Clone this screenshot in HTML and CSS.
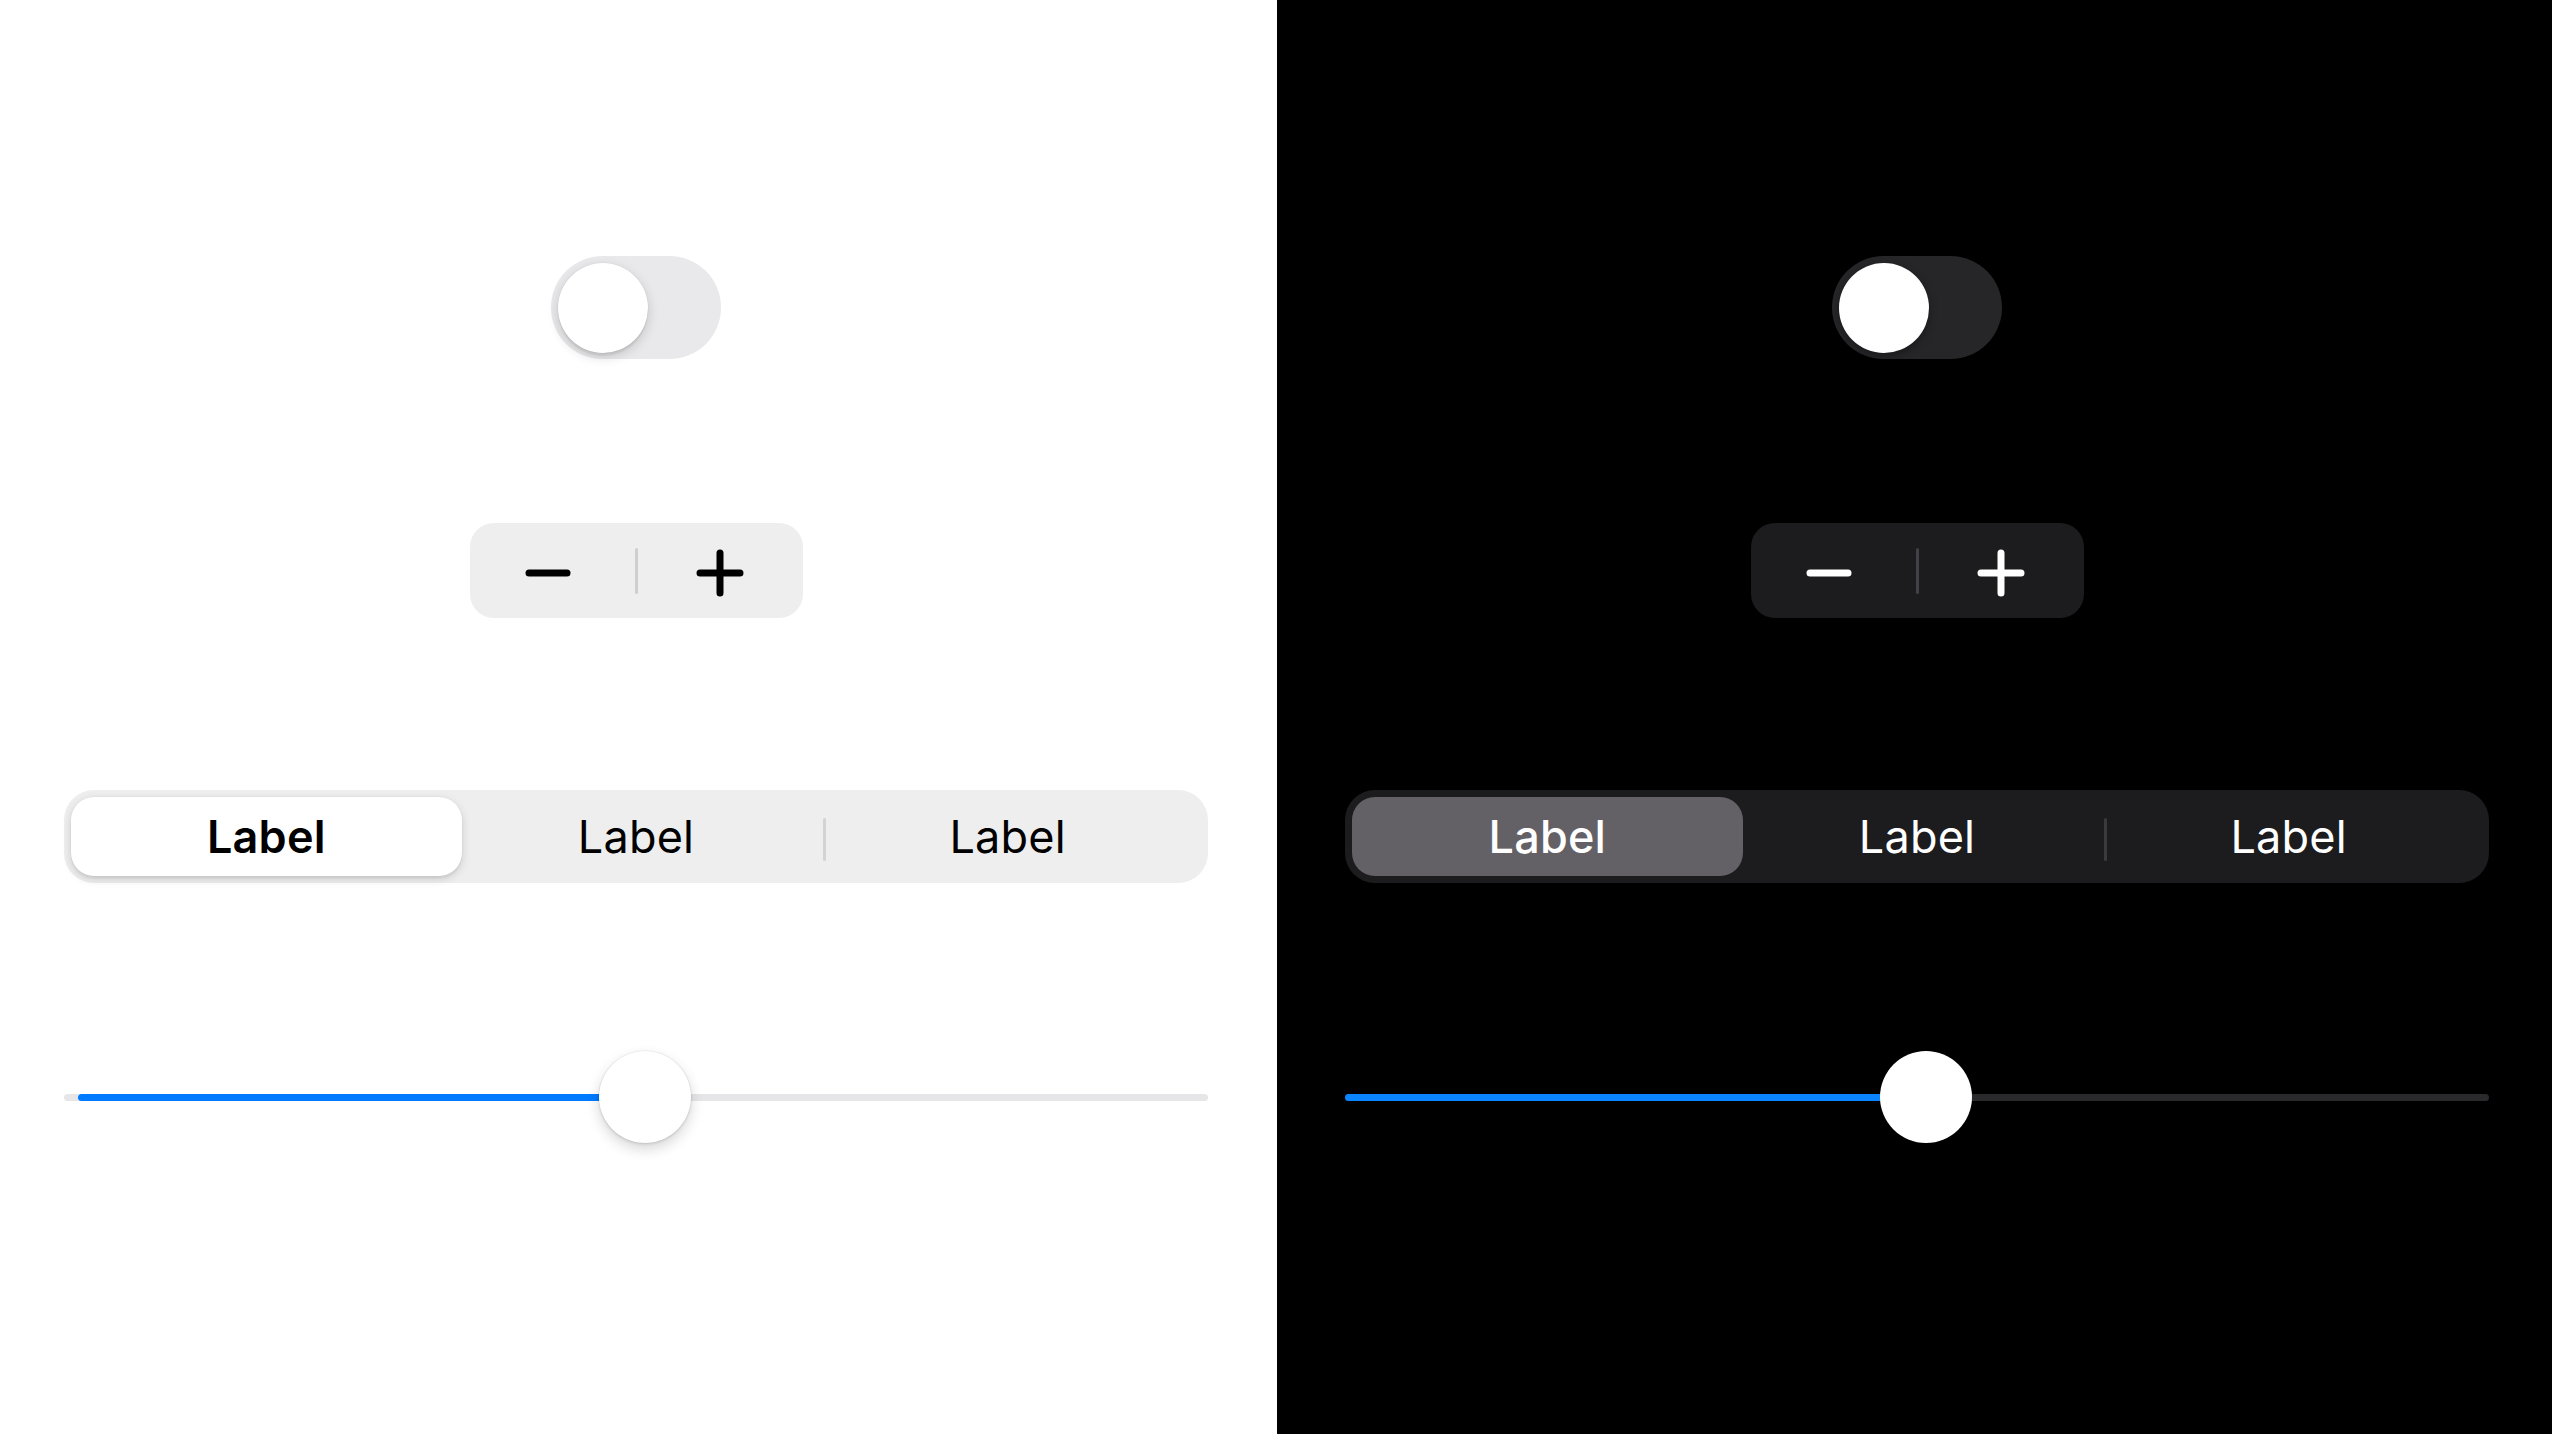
FILE: index.html
```html
<!DOCTYPE html>
<html lang="en">
<head>
<meta charset="utf-8">
<title>Controls</title>
<link rel="stylesheet" href="styles.css">
</head>
<body>
<div class="page">
  <section class="panel panel--light">
    <div class="toggle"><div class="toggle__thumb"></div></div>
    <div class="stepper">
      <div class="stepper__btn stepper__btn--minus">
        <svg width="50" height="50" viewBox="0 0 50 50"><path d="M6 25H44" stroke="currentColor" stroke-width="7" stroke-linecap="round" fill="none"/></svg>
      </div>
      <div class="stepper__divider"></div>
      <div class="stepper__btn">
        <svg width="50" height="50" viewBox="0 0 50 50"><path d="M5 25H45M25 5V45" stroke="currentColor" stroke-width="7" stroke-linecap="round" fill="none"/></svg>
      </div>
    </div>
    <div class="segmented">
      <div class="segment segment--selected">Label</div>
      <div class="segment">Label</div>
      <div class="segment segment--divided">Label</div>
    </div>
    <div class="slider">
      <div class="slider__track">
        <div class="slider__fill" style="width: 50.8%"></div>
      </div>
      <div class="slider__thumb" style="left: 50.8%"></div>
    </div>
  </section>
  <section class="panel panel--dark">
    <div class="toggle"><div class="toggle__thumb"></div></div>
    <div class="stepper">
      <div class="stepper__btn stepper__btn--minus">
        <svg width="50" height="50" viewBox="0 0 50 50"><path d="M6 25H44" stroke="currentColor" stroke-width="7" stroke-linecap="round" fill="none"/></svg>
      </div>
      <div class="stepper__divider"></div>
      <div class="stepper__btn">
        <svg width="50" height="50" viewBox="0 0 50 50"><path d="M5 25H45M25 5V45" stroke="currentColor" stroke-width="7" stroke-linecap="round" fill="none"/></svg>
      </div>
    </div>
    <div class="segmented">
      <div class="segment segment--selected">Label</div>
      <div class="segment">Label</div>
      <div class="segment segment--divided">Label</div>
    </div>
    <div class="slider">
      <div class="slider__track">
        <div class="slider__fill" style="width: 50.8%"></div>
      </div>
      <div class="slider__thumb" style="left: 50.8%"></div>
    </div>
  </section>
</div>
</body>
</html>
```

FILE: styles.css
```css
* { box-sizing: border-box; }

html, body {
  margin: 0;
  padding: 0;
  width: 2552px;
  height: 1434px;
  overflow: hidden;
  font-family: Inter, "Noto Sans", "Liberation Sans", sans-serif;
}

.page {
  display: grid;
  grid-template-columns: 1277px 1275px;
  height: 1434px;
}

.panel {
  display: flex;
  flex-direction: column;
  align-items: center;
  padding-top: 256px;
}

.panel--light {
  background: #ffffff;
  padding-left: 64px;
  padding-right: 69px;
  color: #000;
}

.panel--dark {
  background: #000000;
  padding-left: 68px;
  padding-right: 63px;
  color: #fff;
}

/* Toggle */
.toggle {
  width: 170px;
  height: 103px;
  border-radius: 52px;
  padding: 6px 7px;
  display: flex;
  align-items: center;
  background: #e9e9eb;
}
.panel--dark .toggle { background: #262629; }

.toggle__thumb {
  width: 90px;
  height: 90px;
  border-radius: 50%;
  background: #fff;
  box-shadow: 0 3px 1px rgba(0,0,0,0.06), 0 4px 12px rgba(0,0,0,0.16), 0 0 0 0.5px rgba(0,0,0,0.05);
}
.panel--dark .toggle__thumb {
  box-shadow: 0 3px 8px rgba(0,0,0,0.35);
}

/* Stepper */
.stepper {
  margin-top: 164px;
  width: 333px;
  height: 95px;
  border-radius: 24px;
  background: #eeeeef;
  display: flex;
  align-items: center;
  padding-top: 4px;
}
.panel--dark .stepper { background: #1c1c1e; }

.stepper__btn {
  flex: 1;
  display: flex;
  align-items: center;
  justify-content: center;
}
.stepper__btn svg { display: block; }
.stepper__btn--minus svg { margin-left: -8px; }

.stepper__divider {
  width: 3px;
  height: 46px;
  margin-top: -4px;
  border-radius: 2px;
  background: #cfcfd2;
}
.panel--dark .stepper__divider { background: #424246; }

/* Segmented control */
.segmented {
  margin-top: 172px;
  align-self: stretch;
  height: 93px;
  border-radius: 30px;
  background: #eeeeef;
  padding: 7px;
  display: grid;
  grid-template-columns: 1fr 1fr 1fr;
}
.panel--dark .segmented { background: #1c1c1f; }

.segment {
  position: relative;
  display: flex;
  align-items: center;
  justify-content: center;
  font-size: 45px;
  font-weight: 400;
  letter-spacing: 0.2px;
}

.segment--selected {
  margin-right: -14px;
  background: #fff;
  border-radius: 23px;
  font-weight: 600;
  box-shadow: 0 3px 1px rgba(0,0,0,0.04), 0 3px 10px rgba(0,0,0,0.14), 0 0 0 0.5px rgba(0,0,0,0.04);
  z-index: 1;
}
.panel--dark .segment--selected {
  background: #646166;
  box-shadow: none;
  font-weight: 500;
}

.segment--divided { padding-right: 10px; }

.segment--divided::before {
  content: "";
  position: absolute;
  left: -1px;
  top: 21px;
  width: 3px;
  height: 43px;
  border-radius: 2px;
  background: #d3d3d6;
}
.panel--dark .segment--divided::before { background: #3a3a3e; }

/* Slider */
.slider {
  margin-top: 168px;
  align-self: stretch;
  height: 92px;
  position: relative;
  display: flex;
  align-items: center;
}

.slider__track {
  flex: 1;
  height: 7px;
  border-radius: 4px;
  background: #e6e6e8;
  padding-left: 14px;
  display: flex;
}
.panel--dark .slider__track {
  background: #2a2a2d;
  padding-left: 0;
}

.slider__fill {
  height: 100%;
  border-radius: 4px;
  background: #007aff;
}
.panel--dark .slider__fill { background: #0a84ff; }

.slider__thumb {
  position: absolute;
  top: 0;
  width: 92px;
  height: 92px;
  margin-left: -46px;
  border-radius: 50%;
  background: #fff;
  box-shadow: 0 6px 14px rgba(0,0,0,0.16), 0 1px 3px rgba(0,0,0,0.12), 0 0 0 0.5px rgba(0,0,0,0.06);
}
.panel--dark .slider__thumb { box-shadow: none; }
```
